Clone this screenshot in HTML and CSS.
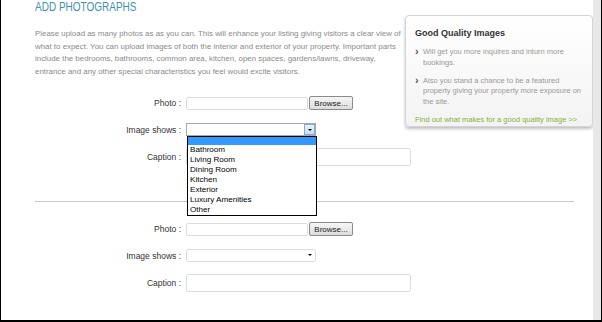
FILE: index.html
```html
<!DOCTYPE html>
<html lang="en">
<head>
    <meta charset="UTF-8">
    <meta name="viewport" content="width=device-width, initial-scale=1.0">
    <title>Add Photographs</title>
    <link rel="stylesheet" href="styles.css">
</head>
<body>
    <div class="page">
        <div class="content">
            <aside class="tips">
                <h3>Good Quality Images</h3>
                <ul>
                    <li>Will get you more inquires and inturn more bookings.</li>
                    <li>Also you stand a chance to be a featured property giving your property more exposure on the site.</li>
                </ul>
                <a href="#">Find out what makes for a good quality image &gt;&gt;</a>
            </aside>

            <h1>ADD PHOTOGRAPHS</h1>
            <p class="intro">Please upload as many photos as as you can. This will enhance your listing giving visitors a clear view of what to expect. You can upload images of both the interior and exterior of your property. Important parts include the bedrooms, bathrooms, common area, kitchen, open spaces, gardens/lawns, driveway, entrance and any other special characteristics you feel would excite visitors.</p>

            <div class="photo-form">
                <div class="form-row row-photo">
                    <label>Photo :</label>
                    <input type="text" class="file-name" readonly>
                    <button type="button" class="browse">Browse...</button>
                </div>
                <div class="form-row row-shows">
                    <label>Image shows :</label>
                    <div class="select open">
                        <span class="arrow-box"><span class="arrow"></span></span>
                        <ul class="options">
                            <li class="selected">&nbsp;</li>
                            <li>Bathroom</li>
                            <li>Living Room</li>
                            <li>Dining Room</li>
                            <li>Kitchen</li>
                            <li>Exterior</li>
                            <li>Luxury Amenities</li>
                            <li>Other</li>
                        </ul>
                    </div>
                </div>
                <div class="form-row row-caption">
                    <label>Caption :</label>
                    <input type="text" class="caption">
                </div>
            </div>

            <hr class="divider">

            <div class="photo-form second">
                <div class="form-row row-photo">
                    <label>Photo :</label>
                    <input type="text" class="file-name" readonly>
                    <button type="button" class="browse">Browse...</button>
                </div>
                <div class="form-row row-shows">
                    <label>Image shows :</label>
                    <div class="select">
                        <span class="arrow"></span>
                    </div>
                </div>
                <div class="form-row row-caption">
                    <label>Caption :</label>
                    <input type="text" class="caption">
                </div>
            </div>
        </div>
        <div class="scrollbar"></div>
    </div>
</body>
</html>
```

FILE: styles.css
```css
body {
    margin: 0;
    font-family: "Liberation Sans", Arial, sans-serif;
    background: #fff;
}
.page {
    display: flex;
    height: 322px;
    box-sizing: border-box;
    border: 1px solid #000;
    border-top: none;
    border-bottom-width: 2px;
    overflow: hidden;
}
.content {
    flex: 1;
    padding-left: 34px;
}
.scrollbar {
    width: 8px;
    background-color: #e8e8e8;
}
h1 {
    margin: 0;
    font-size: 12.5px;
    line-height: 15px;
    font-weight: normal;
    color: #3d93ae;
    transform: scaleX(0.8);
    transform-origin: left center;
}
.intro {
    margin: 13px 0 0;
    width: 369px;
    font-size: 7.9px;
    line-height: 12.7px;
    color: #8a8a8a;
}

/* sidebar */
.tips {
    float: right;
    width: 188px;
    height: 112px;
    margin-top: 15px;
    padding: 11px 9px 0;
    box-sizing: border-box;
    border: 1px solid #d4d4d4;
    border-radius: 4px;
    background: linear-gradient(#fff, #f3f3f3);
    box-shadow: 0 2px 3px rgba(0,0,0,0.25);
}
.tips h3 {
    margin: 0;
    font-size: 9px;
    line-height: 12px;
    color: #333;
}
.tips ul {
    list-style: none;
    margin: 8px 0 0;
    padding: 0;
}
.tips li {
    position: relative;
    padding-left: 8px;
    margin-bottom: 7.5px;
    font-size: 7.5px;
    line-height: 10.5px;
    color: #999;
}
.tips li::before {
    content: "\203A";
    position: absolute;
    left: 0;
    top: -1px;
    font-size: 11px;
    font-weight: bold;
    color: #555;
}
.tips a {
    display: block;
    margin-top: 8px;
    font-size: 7.5px;
    line-height: 10px;
    color: #86b034;
    text-decoration: none;
}

/* form */
.photo-form {
    margin-top: 17.5px;
}
.photo-form.second {
    margin-top: 20px;
}
.form-row {
    display: flex;
    align-items: center;
    font-size: 8.5px;
}
.form-row label {
    width: 146px;
    margin-right: 5px;
    text-align: right;
    color: #333;
}
.row-photo {
    height: 14px;
    margin-bottom: 13px;
}
.row-shows {
    height: 13px;
    margin-bottom: 12px;
}
.row-caption {
    height: 18px;
}
input.file-name {
    width: 122px;
    height: 13px;
    padding: 0;
    box-sizing: border-box;
    border: 1px solid #ddd;
    border-radius: 2px;
}
input.caption {
    width: 225px;
    height: 18px;
    padding: 0;
    box-sizing: border-box;
    border: 1px solid #ddd;
    border-radius: 2px;
}
.browse {
    width: 44px;
    height: 14px;
    margin-left: 1px;
    padding: 0;
    box-sizing: border-box;
    border: 1px solid #8a8a8a;
    border-radius: 2px;
    background: linear-gradient(#f6f6f6, #dcdcdc);
    font-family: inherit;
    font-size: 8px;
    color: #222;
}
.select {
    position: relative;
    width: 130px;
    height: 13px;
    box-sizing: border-box;
    border: 1px solid #ddd;
    border-radius: 2px;
    background: #fff;
}
.select .arrow {
    position: absolute;
    right: 3px;
    top: 4px;
    width: 0;
    height: 0;
    border-left: 2px solid transparent;
    border-right: 2px solid transparent;
    border-top: 2.5px solid #000;
}
.select.open {
    border-color: #a9a9a9;
    border-radius: 0;
}
.select.open .arrow-box {
    position: absolute;
    right: 0;
    top: 0;
    width: 11px;
    height: 11px;
    box-sizing: border-box;
    border: 1px solid #8aa9cc;
    background: linear-gradient(#e9f3fb, #c4dcf1);
}
.select.open .arrow {
    right: 2.5px;
    top: 4px;
}
.options {
    position: absolute;
    left: 0;
    top: 12px;
    z-index: 2;
    width: 130px;
    margin: 0;
    padding: 0;
    list-style: none;
    box-sizing: border-box;
    border: 1px solid #000;
    background: #fff;
}
.options li {
    height: 10px;
    padding-left: 2px;
    font-size: 8.1px;
    line-height: 10px;
    color: #000;
}
.options li.selected {
    height: 8px;
    background-color: #3399ff;
}
.divider {
    margin: 35px 19px 0 0;
    border: none;
    border-top: 1px solid #c8c8c8;
}
```
